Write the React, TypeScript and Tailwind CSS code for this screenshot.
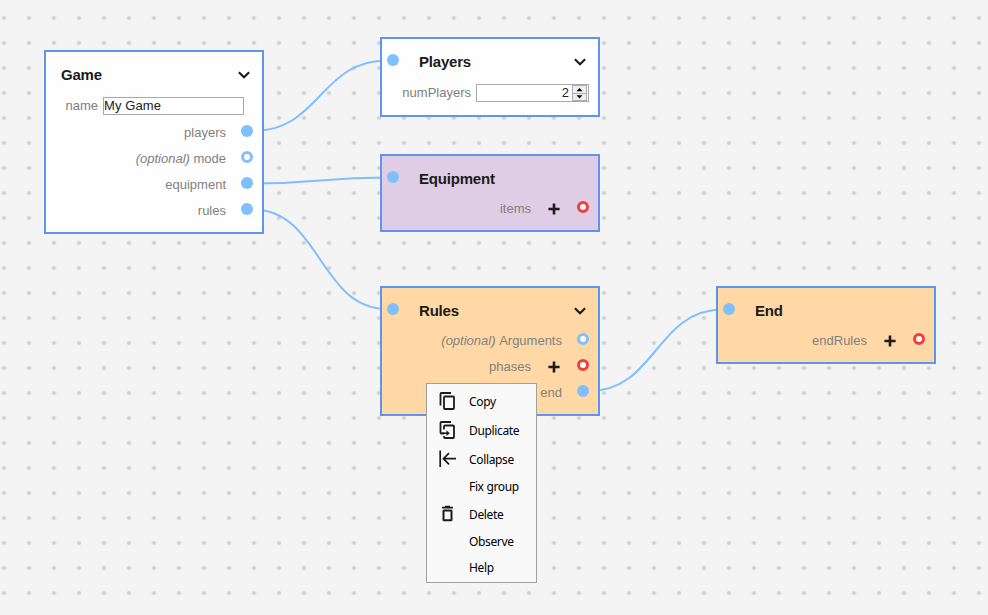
import type { ReactNode } from "react";

type Row = { label: string; optional?: boolean; plus?: boolean; port: "blue" | "open" | "red" };

const ports = {
  blue: "bg-[#80bfff]",
  open: "border-[3px] border-[#80bfff] bg-white",
  red: "border-[3px] border-[#ee3e3e] bg-white",
};

function Port({ kind }: { kind: Row["port"] }) {
  return <span className={`size-3 shrink-0 rounded-full ${ports[kind]}`} />;
}

function Chevron() {
  return (
    <svg width="12" height="8" viewBox="0 0 12 8" fill="none" className="mr-[12px]">
      <path d="M0.9 1.2 L6 6.3 L11.1 1.2" stroke="#1b1b1b" strokeWidth="2.1" />
    </svg>
  );
}

function Plus() {
  return (
    <svg width="12" height="12" viewBox="0 0 12 12" className="mt-[3px]">
      <path d="M4.7 .5h2.6v4.2H11.6v2.6H7.3V11.5H4.7V7.3H.4V4.7h4.3z" fill="#1b1b1b" />
    </svg>
  );
}

function Node({ title, place, input, chevron, children, rows = [] }: {
  title: string; place: string; input?: boolean; chevron?: boolean; children?: ReactNode; rows?: Row[];
}) {
  return (
    <section className={`absolute w-[220px] border-2 border-[#5e95ef] ${place}`}>
      <header className="mt-[10px] mb-[2px] flex h-[26px] items-center">
        {input ? <span className="mb-[4px] ml-[5px] flex"><Port kind="blue" /></span> : null}
        <h2 className={`flex-1 text-[15px] font-bold tracking-[-0.2px] text-[#1b1b1b] ${input ? "ml-5" : "ml-[15px]"}`}>{title}</h2>
        {chevron && <Chevron />}
      </header>
      {children}
      {rows.map((r) => (
        <div key={r.label} className="flex h-[26px] items-center justify-end pr-[9px]">
          <span className="mt-[4px] whitespace-pre">
            {r.optional && <i>(optional) </i>}
            {r.label}
          </span>
          {r.plus && <span className="ml-[17px] flex"><Plus /></span>}
          <span className={r.plus ? "ml-[17px] flex" : "ml-[15px] flex"}><Port kind={r.port} /></span>
        </div>
      ))}
    </section>
  );
}

const icons: Record<string, ReactNode> = {
  Copy: (
    <>
      <path d="M1.5 13.5V2Q1.5 1 2.5 1H12" />
      <rect x="5" y="4.5" width="10" height="12.5" rx="1" />
    </>
  ),
  Duplicate: (
    <>
      <path d="M5 12.5H2.5Q1.5 12.5 1.5 11.5V2Q1.5 1 2.5 1H12" />
      <path d="M5 8.5V5.5Q5 4.5 6 4.5H14Q15 4.5 15 5.5V16Q15 17 14 17H6Q5 17 5 16V15" />
      <path d="M3 12.2H8.5" strokeWidth="1.6" />
      <path d="M7.5 9.3V15.1L10.8 12.2Z" fill="#1b1b1b" stroke="none" />
    </>
  ),
  Collapse: <path d="M1.2 .5V17M4 8.7H17M10 3.1L4.4 8.7L10 14.3" strokeWidth="1.7" />,
  Delete: (
    <>
      <path d="M3 2.7H14M6 1.7H11" />
      <rect x="4.5" y="5.5" width="8" height="9.8" rx="0.5" strokeWidth="2" />
    </>
  ),
};

const menu = [
  ["Copy", "h-[29px]"],
  ["Duplicate", "h-[29px]"],
  ["Collapse", "h-[29px]"],
  ["Fix group", "h-[26px]"],
  ["Delete", "h-[29px]"],
  ["Observe", "h-[26px]"],
  ["Help", "h-[26px]"],
];

export default function App() {
  return (
    <main className="relative h-[615px] w-[988px] overflow-hidden bg-[#f4f4f4] font-['Liberation_Sans',sans-serif] text-[13px] leading-[16px] text-[#808080]">
      <svg width="988" height="615" className="absolute inset-0">
        <defs>
          <pattern id="dots" width="25" height="25" x="-8.5" y="5.5" patternUnits="userSpaceOnUse">
            <circle cx="12.5" cy="12.5" r="2.1" fill="#cfcfcf" />
          </pattern>
        </defs>
        <rect width="988" height="615" fill="url(#dots)" />
        <g fill="none" stroke="#80bfff" strokeWidth="2">
          <path d="M253 131C320 131 320 60.5 387 60.5" />
          <path d="M253 183.5C320 183.5 320 177.5 387 177.5" />
          <path d="M253 209.5C320 209.5 320 309 387 309" />
          <path d="M589 391C656 391 656 309.5 723 309.5" />
        </g>
      </svg>

      <Node
        title="Game"
        place="left-[44px] top-[50px] h-[184px] bg-[#fefefe]"
        chevron
        rows={[
          { label: "players", port: "blue" },
          { label: "mode", optional: true, port: "open" },
          { label: "equipment", port: "blue" },
          { label: "rules", port: "blue" },
        ]}
      >
        <div className="flex h-[28px] justify-end pt-[7px] pr-[18px]">
          <span className="mt-px mr-[5px]">name</span>
          <div className="h-[18px] w-[141px] border border-[#a9a9a9] bg-white tracking-[0.1px] text-[#222]">My Game</div>
        </div>
      </Node>

      <Node title="Players" place="left-[380px] top-[37px] h-[80px] bg-[#fefefe]" input chevron>
        <div className="flex h-[28px] justify-end pt-[7px] pr-[9px]">
          <span className="mt-px mr-[5px]">numPlayers</span>
          <div className="flex h-[18px] w-[113px] justify-end border border-[#a9a9a9] bg-white text-[#222]">
            <span className="mr-[2px]">2</span>
            <svg width="17" height="16" viewBox="0 0 17 16" className="shrink-0">
              <rect x="1" y="0" width="15" height="16" fill="#adadad" />
              <rect x="2" y="1" width="13" height="7" fill="#efefef" />
              <rect x="2" y="9" width="13" height="6" fill="#efefef" />
              <path d="M5.5 6.2L8.5 3L11.5 6.2zM5.5 10.3H11.5L8.5 13.5z" fill="#000" />
            </svg>
          </div>
        </div>
      </Node>

      <Node title="Equipment" place="left-[380px] top-[154px] h-[78px] bg-[#decde5]" input
        rows={[{ label: "items", plus: true, port: "red" }]} />

      <Node title="Rules" place="left-[380px] top-[286px] h-[130px] bg-[#ffd8a6]" input chevron
        rows={[
          { label: "Arguments", optional: true, port: "open" },
          { label: "phases", plus: true, port: "red" },
          { label: "end", port: "blue" },
        ]} />

      <Node title="End" place="left-[716px] top-[286px] h-[78px] bg-[#ffd8a6]" input
        rows={[{ label: "endRules", plus: true, port: "red" }]} />

      <ul className="absolute top-[383px] left-[426px] h-[200px] w-[111px] border border-[#a0a0a0] bg-[#f9f9f9] pt-[3px] font-['Noto_Sans',sans-serif] text-[12px] text-black">
        {menu.map(([name, height]) => (
          <li key={name} className={`flex items-center ${height}`}>
            <svg width="18" height="20" viewBox="0 0 18 20" fill="none" stroke="#1b1b1b" strokeWidth="1.8" className="mr-[12px] ml-[12px]">
              {icons[name]}
            </svg>
            <span className="tracking-[-0.35px]">{name}</span>
          </li>
        ))}
      </ul>
    </main>
  );
}
